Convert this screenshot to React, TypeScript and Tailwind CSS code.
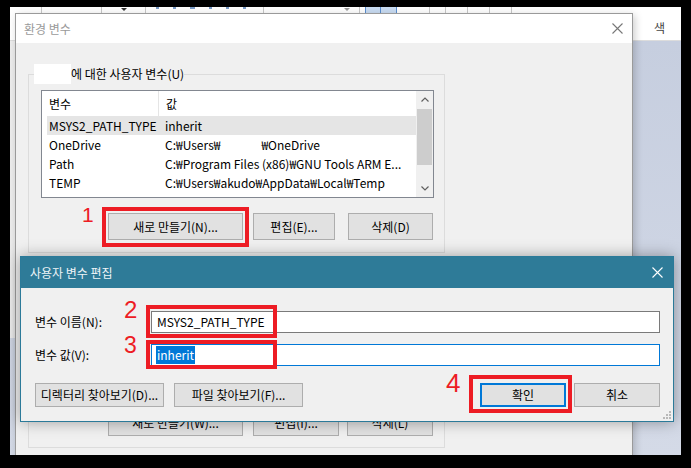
import type { ReactNode } from 'react';

function CloseIcon({ className }: { className: string }) {
  return (
    <svg width="11" height="11" viewBox="0 0 11 11" className={className}>
      <path d="M0.5 0.5L10.5 10.5M10.5 0.5L0.5 10.5" stroke="currentColor" strokeWidth="1.1" fill="none" />
    </svg>
  );
}

function Chevron({ down = false }: { down?: boolean }) {
  return (
    <svg width="8" height="5" viewBox="0 0 8 5" className="text-[#606060]">
      <path d={down ? 'M0.5 0.5L4 4L7.5 0.5' : 'M0.5 4.5L4 1L7.5 4.5'} stroke="currentColor" strokeWidth="1.2" fill="none" />
    </svg>
  );
}

function Btn({
  children,
  className = '',
  border = 'border border-[#adadad]',
}: {
  children: ReactNode;
  className?: string;
  border?: string;
}) {
  return (
    <div className={`flex shrink-0 items-center justify-center bg-[#e1e1e1] text-[12px] leading-none text-black ${border} ${className}`}>
      {children}
    </div>
  );
}

const rows: { name: string; value: ReactNode; selected?: boolean }[] = [
  { name: 'MSYS2_PATH_TYPE', value: 'inherit', selected: true },
  {
    name: 'OneDrive',
    value: (
      <>
        C:₩Users₩<span className="ml-[41px]">₩OneDrive</span>
      </>
    ),
  },
  { name: 'Path', value: 'C:₩Program Files (x86)₩GNU Tools ARM E...' },
  { name: 'TEMP', value: 'C:₩Users₩akudo₩AppData₩Local₩Temp' },
];

function VarList({ withRows }: { withRows: boolean }) {
  return (
    <div className="ml-[12px] mt-[6px] flex h-[108px] w-[393px] border border-[#828790] bg-white">
      <div className="flex-1 overflow-hidden">
        <div className="flex h-[25px] items-center text-[12px] leading-none">
          <div className="flex h-full w-[117px] items-center border-r border-[#e5e5e5] pl-[7px]">변수</div>
          <div className="pl-[7px]">값</div>
        </div>
        {withRows && (
          <div className="ml-[5px]">
            {rows.map((r) => (
              <div
                key={r.name}
                className={`flex h-[19px] items-center whitespace-nowrap text-[12px] leading-none ${r.selected ? 'bg-[#e5e5e5]' : ''}`}
              >
                <div className="w-[111px] pl-[2px]">{r.name}</div>
                <div className="pl-[7px]">{r.value}</div>
              </div>
            ))}
          </div>
        )}
      </div>
      <div className="flex w-[17px] flex-col items-center bg-[#f0f0f0]">
        <div className="flex h-[17px] items-center justify-center">
          <Chevron />
        </div>
        <div className="mt-[1px] h-[56px] w-[15px] bg-[#cdcdcd]" />
        <div className="flex-1" />
        <div className="flex h-[17px] items-center justify-center">
          <Chevron down />
        </div>
      </div>
    </div>
  );
}

export default function App() {
  return (
    <div className="h-[468px] w-[691px] bg-black pl-[10px] pt-[7px] font-['Noto_Sans_CJK_KR','Noto_Sans',sans-serif] text-black">
      {/* desktop behind the dialogs */}
      <div className="relative h-[448px] w-[671px] overflow-hidden bg-[#cbd3e2]">
        <div className="flex h-[6px] bg-white">
          <div className="w-[32px] border-r border-[#c8c8c8]" />
          <div className="w-[60px] border-r border-[#c8c8c8]" />
          <div className="flex w-[44px] justify-center border-r border-[#c8c8c8] pt-[1px]">
            <div className="h-0 w-0 border-x-[3px] border-t-[3px] border-x-transparent border-t-[#333]" />
          </div>
          <div className="flex w-[118px] items-start gap-[14px] border-r border-[#c8c8c8] pl-[10px]">
            <div className="h-[2px] w-[3px] bg-[#7a9cc8]" />
            <div className="h-[2px] w-[3px] bg-[#7a9cc8]" />
            <div className="h-[2px] w-[5px] bg-[#7a9cc8]" />
            <div className="h-[2px] w-[3px] bg-[#7a9cc8]" />
            <div className="h-[2px] w-[3px] bg-[#7a9cc8]" />
            <div className="h-[2px] w-[3px] bg-[#7a9cc8]" />
          </div>
          <div className="flex w-[96px] justify-center border-r border-[#c8c8c8] pt-[1px]">
            <div className="ml-[70px] h-0 w-0 border-x-[3px] border-t-[3px] border-x-transparent border-t-[#999]" />
          </div>
          <div className="ml-[5px] w-[16px] border-x border-[#5b8fd0] bg-[#c9dcf2]" />
          <div className="w-[16px] border-r border-[#5b8fd0] bg-[#c9dcf2]" />
          <div className="w-[33px] border-r border-[#c8c8c8]" />
          <div className="w-[16px] border-r border-[#c8c8c8]" />
          <div className="w-[22px] border-r border-[#c8c8c8]" />
          <div className="w-[22px] border-r border-[#c8c8c8]" />
          <div className="w-[22px] border-r border-[#c8c8c8]" />
        </div>
        <div className="flex h-[28px] items-center justify-end border-b border-[#dcdcdc] bg-white pr-[16px] pt-[3px]">
          <span className="text-[12px] leading-none text-[#444]">색</span>
        </div>
        <div className="flex h-[414px] bg-gradient-to-b from-[#c6cedf] to-[#d4dae7]">
          <div className="h-[297px] w-[5px] bg-[#ececec]" />
        </div>

        {/* 환경 변수 dialog */}
        <div className="absolute left-[5px] top-[6px] flex h-[460px] w-[618px] flex-col border border-[#9a9a9a] bg-[#f0f0f0] shadow-[2px_2px_8px_rgba(0,0,0,0.2)]">
          <div className="flex h-[29px] shrink-0 items-center justify-between bg-white pl-[8px] pr-[9px]">
            <span className="text-[12px] leading-none text-[#9a9a9a]">환경 변수</span>
            <CloseIcon className="text-[#777]" />
          </div>

          <fieldset className="ml-[12px] mt-[21px] h-[189px] w-[417px] shrink-0 border border-[#dcdcdc]">
            <legend className="ml-[5px]">
              <div className="flex h-[20px] items-center">
                <div className="h-[20px] w-[37px] bg-white" />
                <span className="text-[12px] leading-none">에 대한 사용자 변수(U)</span>
              </div>
            </legend>
            <VarList withRows />
            <div className="ml-[79px] mt-[15px] flex h-[27px]">
              <Btn className="w-[135px]">새로 만들기(N)...</Btn>
              <Btn className="ml-[10px] w-[82px]">편집(E)...</Btn>
              <Btn className="ml-[13px] w-[85px]">삭제(D)</Btn>
            </div>
          </fieldset>

          <fieldset className="ml-[12px] mt-[9px] h-[186px] w-[417px] shrink-0 border border-[#dcdcdc]">
            <legend className="ml-[5px]">
              <div className="h-[20px] w-[90px]" />
            </legend>
            <VarList withRows={false} />
            <div className="ml-[79px] mt-[13px] flex h-[27px]">
              <Btn className="w-[135px]">새로 만들기(W)...</Btn>
              <Btn className="ml-[10px] w-[86px]">편집(I)...</Btn>
              <Btn className="ml-[8px] w-[86px]">삭제(L)</Btn>
            </div>
          </fieldset>
        </div>

        {/* 사용자 변수 편집 dialog */}
        <div className="absolute left-[10px] top-[249px] flex h-[166px] w-[654px] flex-col border border-[#2b7a99] bg-[#f0f0f0] shadow-[0_0_14px_rgba(0,0,0,0.35)]">
          <div className="flex h-[31px] shrink-0 items-center justify-between bg-[#2e7b98] pl-[9px] pr-[10px]">
            <span className="text-[12px] leading-none text-[#eef4f7]">사용자 변수 편집</span>
            <CloseIcon className="text-white" />
          </div>
          <div className="flex flex-col pl-[14px] pt-[23px]">
            <div className="flex h-[22px] items-center">
              <div className="w-[116px] text-[12px] leading-none">변수 이름(N):</div>
              <div className="flex h-[22px] w-[509px] items-center border border-[#7a7a7a] bg-white pl-[5px] text-[12px] leading-none">
                MSYS2_PATH_TYPE
              </div>
            </div>
            <div className="mt-[11px] flex h-[22px] items-center">
              <div className="w-[116px] text-[12px] leading-none">변수 값(V):</div>
              <div className="flex h-[22px] w-[509px] items-center border border-[#0078d7] bg-white pl-[4px]">
                <span className="flex h-[18px] items-center bg-[#0078d7] px-[1px] text-[12px] leading-none text-white">inherit</span>
              </div>
            </div>
            <div className="mt-[17px] flex h-[24px]">
              <Btn className="w-[129px]">디렉터리 찾아보기(D)...</Btn>
              <Btn className="ml-[10px] w-[129px]">파일 찾아보기(F)...</Btn>
              <Btn className="ml-[177px] w-[86px]" border="border-2 border-[#0078d7]">
                확인
              </Btn>
              <Btn className="ml-[8px] w-[86px]">취소</Btn>
            </div>
          </div>
          <svg width="8" height="8" viewBox="0 0 8 8" className="absolute bottom-[2px] right-[2px] text-[#b8b8b8]">
            <rect x="6" y="0" width="2" height="2" fill="currentColor" />
            <rect x="3" y="3" width="2" height="2" fill="currentColor" />
            <rect x="6" y="3" width="2" height="2" fill="currentColor" />
            <rect x="0" y="6" width="2" height="2" fill="currentColor" />
            <rect x="3" y="6" width="2" height="2" fill="currentColor" />
            <rect x="6" y="6" width="2" height="2" fill="currentColor" />
          </svg>
        </div>

        {/* red annotations */}
        <div className="absolute left-[92px] top-[200px] h-[40px] w-[147px] border-[4px] border-[#ed1c24]" />
        <div className="absolute left-[136px] top-[298px] h-[33px] w-[131px] border-[4px] border-[#ed1c24]" />
        <div className="absolute left-[136px] top-[333px] h-[29px] w-[131px] border-[4px] border-[#ed1c24]" />
        <div className="absolute left-[459px] top-[368px] h-[38px] w-[103px] border-[4px] border-[#ed1c24]" />
        <span className="absolute left-[72px] top-[197px] font-['Liberation_Sans',sans-serif] text-[21px] leading-none text-[#ed1c24]">1</span>
        <span className="absolute left-[114px] top-[291px] font-['Liberation_Sans',sans-serif] text-[24px] leading-none text-[#ed1c24]">2</span>
        <span className="absolute left-[114px] top-[327px] font-['Liberation_Sans',sans-serif] text-[23px] leading-none text-[#ed1c24]">3</span>
        <span className="absolute left-[436px] top-[363px] font-['Liberation_Sans',sans-serif] text-[26px] leading-none text-[#ed1c24]">4</span>
      </div>
    </div>
  );
}
